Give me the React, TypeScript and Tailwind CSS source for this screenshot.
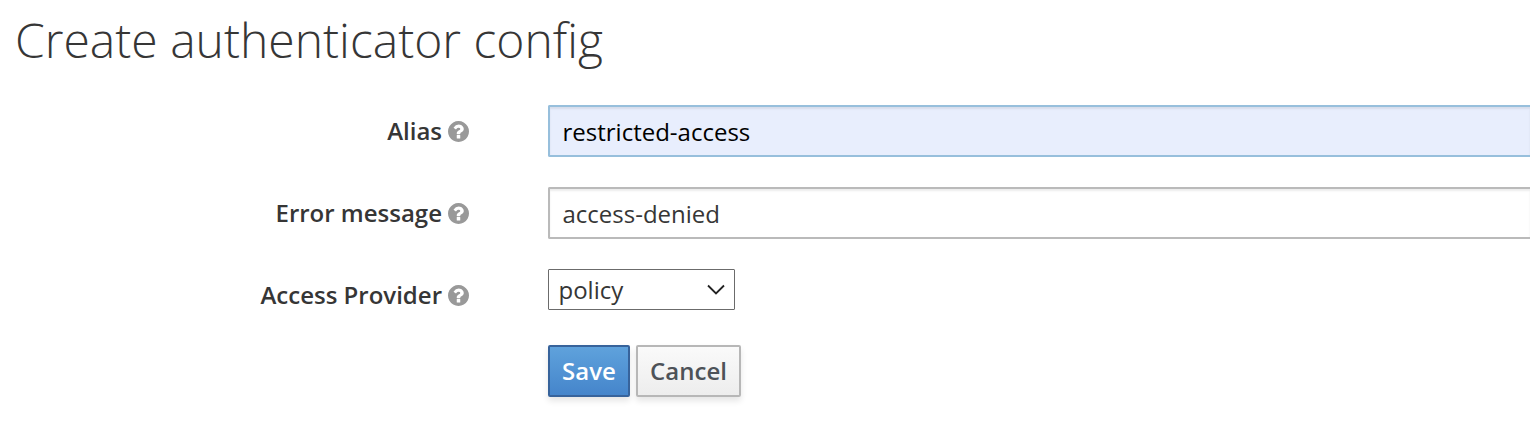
import type { ReactNode } from "react";

function HelpIcon() {
  return (
    <svg className="size-[21px] shrink-0 text-[#999999]" viewBox="0 128 1536 1536" fill="currentColor" aria-hidden="true">
      <path d="M896 1376v-192q0-14-9-23t-23-9h-192q-14 0-23 9t-9 23v192q0 14 9 23t23 9h192q14 0 23-9t9-23zm256-672q0-88-55.5-163t-138.5-116-170-41q-243 0-371 213-15 24 8 42l132 100q7 6 19 6 16 0 25-12 53-68 86-92 34-24 86-24 48 0 85.5 26t37.5 59q0 38-20 61t-68 45q-63 28-115.5 86.5t-52.5 125.5v36q0 14 9 23t23 9h192q14 0 23-9t9-23q0-19 21.5-49.5t54.5-49.5q32-18 49-28.5t46-35 44.5-48 28-60.5 12.5-81zm384 192q0 209-103 385.5t-279.5 279.5-385.5 103-385.5-103-279.5-279.5-103-385.5 103-385.5 279.5-279.5 385.5-103 385.5 103 279.5 279.5 103 385.5z" />
    </svg>
  );
}

function Row({ label, children }: { label: string; children: ReactNode }) {
  return (
    <div className="flex h-[52px] items-start">
      <label className="flex h-[52px] w-[469px] items-center justify-end gap-[6px] text-[24px] font-semibold text-[#363636]">
        <span>{label}</span>
        <HelpIcon />
      </label>
      <div className="ml-[79px] flex-1">{children}</div>
    </div>
  );
}

export default function App() {
  return (
    <main className="h-[438px] overflow-hidden bg-white font-['Open_Sans',sans-serif] text-[#363636]">
      <h1 className="h-[105px] pt-[8px] pl-[15px] text-[48px] leading-[64px] font-light whitespace-nowrap">Create authenticator config</h1>
      <form className="flex flex-col gap-[30px]">
        <Row label="Alias">
          <div className="flex h-[52px] items-center rounded-l-[2px] border-y-2 border-l-2 border-[#97bfdc] bg-[#e8eefd] pt-[2px] pl-[12.5px] text-[24px] text-black shadow-[inset_0_2px_2px_rgba(3,3,3,0.075)]">restricted-access</div>
        </Row>
        <Row label="Error message">
          <div className="flex h-[52px] items-center rounded-l-[2px] border-y-2 border-l-2 border-[#bababa] pt-[2px] pl-[12.5px] text-[24px] shadow-[inset_0_2px_2px_rgba(3,3,3,0.075)]">access-denied</div>
        </Row>
        <Row label="Access Provider">
          <div className="flex h-[41px] w-[187px] items-center justify-between rounded-[1px] border border-[#6b6b6b] pt-px pr-[9px] pl-[9.5px] text-[24px]">
            <span>policy</span>
            <svg className="h-[12px] w-[18px]" viewBox="0 0 18 12" fill="none" stroke="#222" strokeWidth="1.8"><path d="M1 1.5 9 9.5l8-8" /></svg>
          </div>
        </Row>
      </form>
      <div className="mt-[24px] ml-[548px] flex gap-[6px] text-[24px] font-semibold">
        <button className="h-[52px] w-[82px] rounded-[2px] border-2 border-[#37639b] bg-linear-to-b from-[#5fa2dc] to-[#4585cb] text-white shadow-[0_4px_6px_rgba(3,3,3,0.1)]">Save</button>
        <button className="h-[52px] w-[105px] rounded-[2px] border-2 border-[#b7b7b7] bg-linear-to-b from-[#fafafa] to-[#ededed] text-[#4d5258] shadow-[0_4px_6px_rgba(3,3,3,0.1)]">Cancel</button>
      </div>
    </main>
  );
}
